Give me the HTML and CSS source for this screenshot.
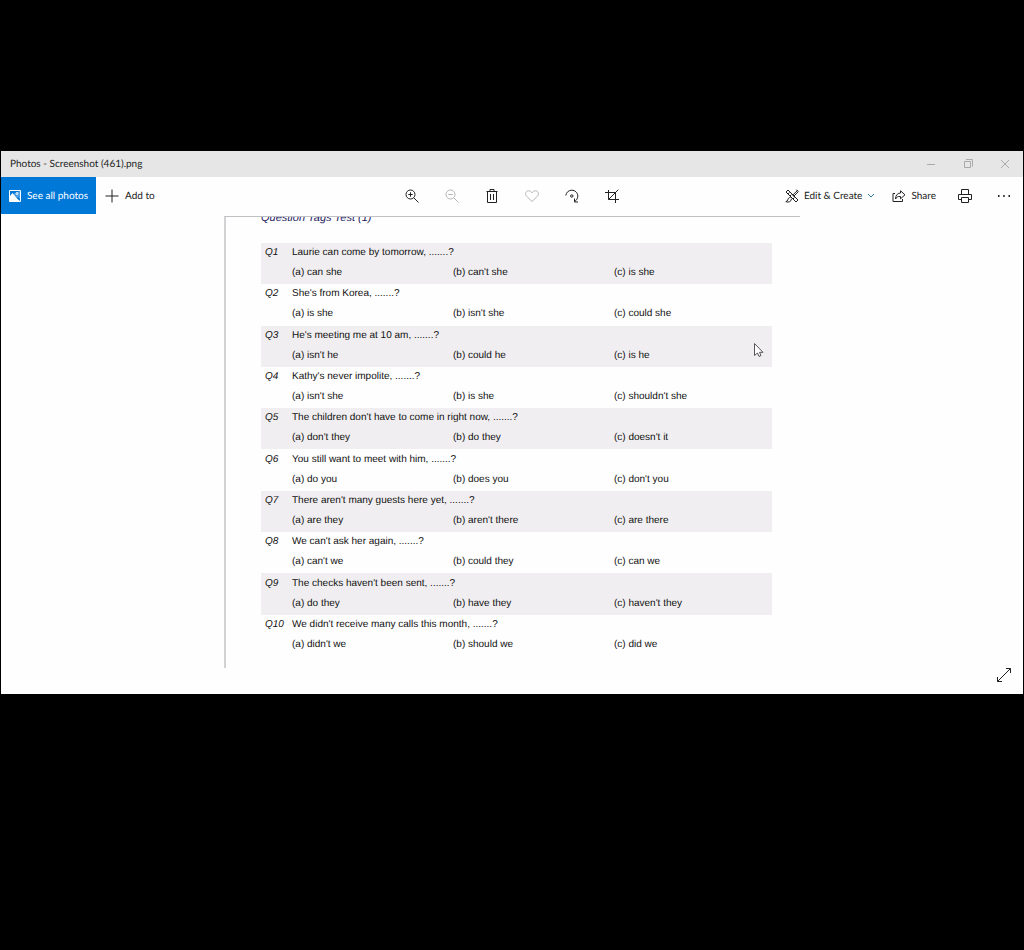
FILE: index.html
```html
<!DOCTYPE html>
<html lang="en">
<head>
    <meta charset="UTF-8">
    <meta name="viewport" content="width=device-width, initial-scale=1.0">
    <title>Photos - Screenshot (461).png</title>
    <link rel="stylesheet" href="styles.css">
</head>
<body>
    <div class="window">
        <header class="titlebar">
            <span class="title">Photos - Screenshot (461).png</span>
            <div class="window-controls">
                <button aria-label="Minimize"><svg width="10" height="10" viewBox="0 0 10 10"><path d="M1 5.5h8"/></svg></button>
                <button aria-label="Restore"><svg width="10" height="10" viewBox="0 0 10 10"><path d="M1.500 2.500h6v6h-6zM3 .5h6.500v7"/></svg></button>
                <button aria-label="Close"><svg width="10" height="10" viewBox="0 0 10 10"><path d="M1 1l8 8M9 1l-8 8"/></svg></button>
            </div>
        </header>

        <nav class="toolbar">
            <div class="tools-left">
                <button class="see-all">
                    <svg width="12" height="12" viewBox="0 0 12 12"><path d="M.5.5h11v11H.5z"/><path d="M1 5.500l2.500-2L8 8l1-1 2 2V1" fill="#fff" fill-opacity=".3" stroke="none"/><path d="M1 6l2.500-3 5 6L11 11H1z" fill="#fff" stroke="none"/><circle cx="8" cy="3.500" r="1"/></svg>
                    See all photos
                </button>
                <button class="add-to">
                    <svg width="14" height="14" viewBox="0 0 14 14"><path d="M7 .5v13M.5 7h13"/></svg>
                    Add to
                </button>
            </div>
            <div class="tools-center">
                <button aria-label="Zoom in"><svg width="14" height="14" viewBox="0 0 14 14"><circle cx="5.500" cy="5.500" r="4.500"/><path d="M8.800 8.800l4.700 4.700M3.300 5.500h4.400M5.500 3.300v4.400"/></svg></button>
                <button class="muted" aria-label="Zoom out"><svg width="14" height="14" viewBox="0 0 14 14"><circle cx="5.500" cy="5.500" r="4.500"/><path d="M8.800 8.800l4.700 4.700M3.300 5.500h4.400"/></svg></button>
                <button aria-label="Delete"><svg width="14" height="14" viewBox="0 0 14 14"><path d="M1.500 2.500h11M5 2.500v-2h4v2M2.500 2.500v11h9v-11M5.500 5v6M8.500 5v6"/></svg></button>
                <button class="muted" aria-label="Favorite"><svg width="14" height="14" viewBox="0 0 14 14"><path d="M7 12.500L1.400 7C-.2 5.200.7 1.800 3.600 1.800 5.200 1.800 6.300 2.700 7 3.900c.7-1.200 1.800-2.100 3.400-2.100 2.900 0 3.800 3.400 2.200 5.200z"/></svg></button>
                <button aria-label="Rotate"><svg width="14" height="14" viewBox="0 0 14 14"><path d="M.8 6.500C1.200 3.400 3.600 1.200 6.800 1.200c3.300 0 6 2.600 6 5.800 0 2.300-1.100 4.200-3.300 5.600M9.500 9.500v3.500h3.500"/><circle cx="6.800" cy="7" r="1.200"/></svg></button>
                <button aria-label="Crop"><svg width="14" height="14" viewBox="0 0 14 14"><path d="M0 3.500h10.500V14M3.500 1v9.500H14M3.500 10.500L13.300.7"/></svg></button>
            </div>
            <div class="tools-right">
                <button class="edit">
                    <svg width="14" height="14" viewBox="0 0 14 14"><path d="M1 3l2-2 10 10-2 2zM3 5l1.500-1.500M5 7l1.500-1.500M8 10l1.500-1.500M12.800 1.200L7.500 6.300M11.300.7l2 2L8.500 7.500M5.500 8.500C3.500 8.300 3 10 2.800 11 2.500 12 1.500 12.500.8 12.700c2.500 1 5.700 0 5.700-3"/></svg>
                    Edit &amp; Create
                    <svg class="chevron" width="8" height="6" viewBox="0 0 8 6"><path d="M1 1l3 3 3-3"/></svg>
                </button>
                <button class="share">
                    <svg width="14" height="14" viewBox="0 0 14 14"><path d="M3 4.500H1v8h9.500V10M8.500 1.800L13 5.800 8.500 9.800V7.500C6 7.200 4.500 8.200 3.500 10 3.600 6.500 5.200 4.200 8.500 4z"/></svg>
                    Share
                </button>
                <button class="icon-button" aria-label="Print"><svg width="14" height="14" viewBox="0 0 14 14"><path d="M3.500 5.500v-5h7v5M3.500 10.500h-3v-5h13v5h-3M3.500 8.500h7v5h-7z"/></svg></button>
                <button class="icon-button" aria-label="See more"><svg width="14" height="14" viewBox="0 0 14 14"><path class="dots" d="M1 7h1.500M6.200 7h1.500M11.500 7H13"/></svg></button>
            </div>
        </nav>

        <main class="viewer">
            <article class="sheet">
                <h1>Question Tags Test (1)</h1>
                <ol class="questions">
                    <li>
                        <span class="number">Q1</span>
                        <p>Laurie can come by tomorrow, .......?</p>
                        <ul><li>(a) can she</li><li>(b) can't she</li><li>(c) is she</li></ul>
                    </li>
                    <li>
                        <span class="number">Q2</span>
                        <p>She's from Korea, .......?</p>
                        <ul><li>(a) is she</li><li>(b) isn't she</li><li>(c) could she</li></ul>
                    </li>
                    <li>
                        <span class="number">Q3</span>
                        <p>He's meeting me at 10 am, .......?</p>
                        <ul><li>(a) isn't he</li><li>(b) could he</li><li>(c) is he</li></ul>
                    </li>
                    <li>
                        <span class="number">Q4</span>
                        <p>Kathy's never impolite, .......?</p>
                        <ul><li>(a) isn't she</li><li>(b) is she</li><li>(c) shouldn't she</li></ul>
                    </li>
                    <li>
                        <span class="number">Q5</span>
                        <p>The children don't have to come in right now, .......?</p>
                        <ul><li>(a) don't they</li><li>(b) do they</li><li>(c) doesn't it</li></ul>
                    </li>
                    <li>
                        <span class="number">Q6</span>
                        <p>You still want to meet with him, .......?</p>
                        <ul><li>(a) do you</li><li>(b) does you</li><li>(c) don't you</li></ul>
                    </li>
                    <li>
                        <span class="number">Q7</span>
                        <p>There aren't many guests here yet, .......?</p>
                        <ul><li>(a) are they</li><li>(b) aren't there</li><li>(c) are there</li></ul>
                    </li>
                    <li>
                        <span class="number">Q8</span>
                        <p>We can't ask her again, .......?</p>
                        <ul><li>(a) can't we</li><li>(b) could they</li><li>(c) can we</li></ul>
                    </li>
                    <li>
                        <span class="number">Q9</span>
                        <p>The checks haven't been sent, .......?</p>
                        <ul><li>(a) do they</li><li>(b) have they</li><li>(c) haven't they</li></ul>
                    </li>
                    <li>
                        <span class="number">Q10</span>
                        <p>We didn't receive many calls this month, .......?</p>
                        <ul><li>(a) didn't we</li><li>(b) should we</li><li>(c) did we</li></ul>
                    </li>
                </ol>
            </article>
            <svg class="cursor" width="10" height="15" viewBox="0 0 10 15"><path d="M.5.5v12l3-2.500 1.500 3.500 2-1-1.500-3.200H9z"/></svg>
            <button class="fullscreen" aria-label="Full screen"><svg width="16" height="16" viewBox="0 0 16 16"><path d="M1.500 14.500l13-13M10 1.500h4.500V6M1.500 10v4.500H6"/></svg></button>
        </main>
    </div>
</body>
</html>
```
FILE: styles.css
```css
* {
    box-sizing: border-box;
}
body {
    margin: 0;
    padding: 151px 1px 0;
    min-height: 100vh;
    background: #000;
    color: #222;
    font-family: Lato, "Open Sans", sans-serif;
    font-size: 10px;
    line-height: 16px;
    text-rendering: geometricPrecision;
}
h1, p, ol, ul {
    margin: 0;
    padding: 0;
    list-style: none;
}
button {
    display: flex;
    align-items: center;
    justify-content: center;
    padding: 0;
    border: none;
    background: none;
    color: inherit;
    font: inherit;
    text-rendering: inherit;
    white-space: nowrap;
}
svg {
    display: block;
    flex: none;
    fill: none;
    stroke: currentColor;
}
.window {
    background: #fefefe;
}

/* title bar */
.titlebar {
    display: flex;
    align-items: center;
    justify-content: space-between;
    height: 26px;
    padding-left: 9px;
    background: #e6e6e6;
}
.window-controls {
    display: flex;
    color: #aaa;
}
.window-controls button {
    width: 37px;
    height: 26px;
}

/* toolbar */
.toolbar {
    display: grid;
    grid-template-columns: 1fr auto 1fr;
    height: 37px;
}
.tools-left,
.tools-center,
.tools-right {
    display: flex;
}
.tools-right {
    justify-content: flex-end;
}
.see-all {
    gap: 6px;
    width: 95px;
    background: #0078d7;
    color: #fff;
}
.add-to {
    gap: 6px;
    margin-left: 9px;
}
.tools-center button {
    width: 40px;
}
.muted {
    color: #b5b5b5;
}
.edit,
.share {
    gap: 5px;
}
.share {
    margin: 0 9px 0 17px;
}
.icon-button {
    width: 39px;
}
.chevron {
    color: #2a78a8;
}
.dots {
    stroke-width: 2;
}

/* photo area */
.viewer {
    position: relative;
    padding: 2px 223px 26px;
}
.sheet {
    width: 576px;
    padding: 0 28px 12px 35px;
    border-top: 1px solid #bfc0c4;
    border-left: 2px solid #d2d2d5;
    color: #111;
    font-family: "Liberation Sans", Arial, sans-serif;
    overflow: hidden;
}
.sheet h1 {
    margin-top: -7px;
    margin-bottom: 17px;
    color: #1c2060;
    font-size: 11px;
    font-weight: normal;
    font-style: italic;
    line-height: 16px;
}
.questions {
    display: flex;
    flex-direction: column;
    min-height: 413px;
}
.questions > li {
    display: grid;
    grid-template-columns: 27px 1fr;
    align-content: center;
    row-gap: 4px;
    flex: 1;
    padding: 0 0 1px 4px;
}
.questions > li:nth-child(odd) {
    background: #f0eef0;
}
.number {
    font-style: italic;
}
.questions ul {
    display: grid;
    grid-template-columns: 161px 161px 1fr;
    grid-column: 2;
}
.cursor {
    position: absolute;
    top: 129px;
    left: 753px;
    color: #555;
    fill: #fff;
}
.fullscreen {
    position: absolute;
    right: 11px;
    bottom: 11px;
}
```
